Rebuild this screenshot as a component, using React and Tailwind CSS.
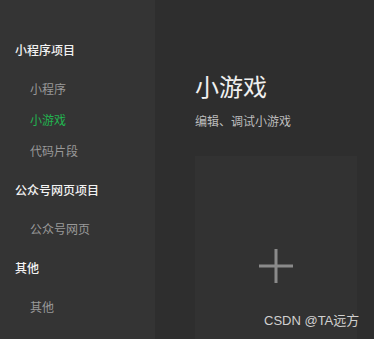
export default function App() {
  const groups = [
    { title: "小程序项目", items: [{ t: "小程序" }, { t: "小游戏", active: true }, { t: "代码片段" }] },
    { title: "公众号网页项目", items: [{ t: "公众号网页" }] },
    { title: "其他", items: [{ t: "其他" }] },
  ];
  return (
    <div
      className="relative flex h-[339px] w-[374px] overflow-hidden bg-[#2e2e2e]"
      style={{ fontFamily: '"Noto Sans CJK SC", "Noto Sans", sans-serif' }}
    >
      <aside className="flex w-[155px] shrink-0 flex-col bg-[#343434] pt-[34px]">
        {groups.map((g) => (
          <div key={g.title} className="mb-[8px] flex flex-col">
            <div className="mb-[8px] flex h-[31px] items-center pl-[15px] text-[12px] font-medium text-[#f2f2f2]">
              {g.title}
            </div>
            {g.items.map((it) => (
              <div
                key={it.t}
                className={
                  "flex h-[31px] items-center pl-[30px] text-[12px] " +
                  (it.active ? "text-[#22b550]" : "text-[#999999]")
                }
              >
                {it.t}
              </div>
            ))}
          </div>
        ))}
      </aside>
      <main className="flex flex-1 flex-col pl-[40px] pt-[70px]">
        <h1 className="h-[32px] text-[24px] leading-[32px] text-[#f0f0f0]">小游戏</h1>
        <p className="mt-[11px] text-[12px] leading-[16px] text-[#bdbdbd]">编辑、调试小游戏</p>
        <div className="mt-[27px] flex h-[220px] w-[162px] shrink-0 items-center justify-center bg-[#323232]">
          <svg width="34" height="34" viewBox="0 0 34 34">
            <rect x="0" y="15.5" width="34" height="3" fill="#8a8a8a" />
            <rect x="15.5" y="0" width="3" height="34" fill="#8a8a8a" />
          </svg>
        </div>
      </main>
      <div
        className="absolute left-[264px] top-[313px] text-[13px] leading-[16px] text-[#d0d0d0]"
        style={{ fontFamily: '"Liberation Sans", "Noto Sans CJK SC", sans-serif' }}
      >
        CSDN @TA远方
      </div>
    </div>
  );
}
